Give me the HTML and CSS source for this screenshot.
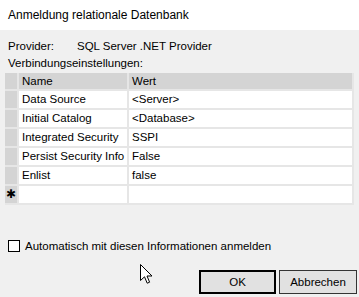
FILE: index.html
```html
<!DOCTYPE html>
<html lang="de">

<head>
    <meta charset="utf-8">
    <link rel="stylesheet" href="styles.css">
</head>

<body>
    <div class="titlebar">Anmeldung relationale Datenbank</div>
    <main class="dialog">
        <div class="provider-row">
            <span class="provider-label">Provider:</span>
            <span>SQL Server .NET Provider</span>
        </div>
        <div class="section-label">Verbindungseinstellungen:</div>

        <!-- property grid -->
        <div class="grid">
            <div class="rowhead"></div>
            <div class="colhead">Name</div>
            <div class="colhead">Wert</div>

            <div class="rowhead"></div>
            <div class="cell">Data Source</div>
            <div class="cell">&lt;Server&gt;</div>

            <div class="rowhead"></div>
            <div class="cell">Initial Catalog</div>
            <div class="cell">&lt;Database&gt;</div>

            <div class="rowhead"></div>
            <div class="cell">Integrated Security</div>
            <div class="cell">SSPI</div>

            <div class="rowhead"></div>
            <div class="cell">Persist Security Info</div>
            <div class="cell">False</div>

            <div class="rowhead"></div>
            <div class="cell">Enlist</div>
            <div class="cell">false</div>

            <div class="rowhead newrow">✱</div>
            <div class="cell"></div>
            <div class="cell"></div>
        </div>

        <label class="auto-login">
            <span class="checkbox"></span>
            Automatisch mit diesen Informationen anmelden
        </label>

        <div class="buttons">
            <button class="btn btn-default">OK</button>
            <button class="btn">Abbrechen</button>
        </div>
    </main>

    <svg class="cursor" width="13" height="21" viewBox="0 0 13 21">
        <path d="M0.5 0.5 L0.5 16.5 L4.5 12.8 L7.2 19.2 L9.6 18.2 L7 12 L12 12 Z" fill="#fff" stroke="#000" stroke-width="1" stroke-linejoin="miter" />
    </svg>
</body>

</html>
```

FILE: styles.css
```css
body {
    margin: 0;
    width: 359px;
    height: 297px;
    overflow: hidden;
    background: #f0f0f0;
    font-family: "Liberation Sans", Arial, sans-serif;
    font-size: 11.5px;
    color: #000;
    position: relative;
}

.titlebar {
    height: 30px;
    line-height: 30px;
    padding-left: 8px;
    background: #fff;
    font-size: 12px;
}

.dialog {
    display: flex;
    flex-direction: column;
    padding: 8px 2px 0 5px;
}

.provider-row {
    display: flex;
    line-height: 16px;
    padding-left: 3px;
}

.provider-label {
    width: 69px;
}

.section-label {
    line-height: 16px;
    margin-top: 1px;
    padding-left: 3px;
}

/* grid looks like a WinForms DataGridView */
.grid {
    display: grid;
    grid-template-columns: 12px 108px 223px;
    grid-template-rows: 16px repeat(6, 17px);
    gap: 2px;
    margin-top: 2px;
    padding: 0 2px 2px 0;
    background: #e6e6e6;
    width: 349px;
    box-sizing: border-box;
}

.rowhead,
.colhead {
    background: #d4d4d4;
}

.colhead,
.cell {
    line-height: 17px;
    padding-left: 3px;
    white-space: nowrap;
    overflow: hidden;
}

.colhead {
    line-height: 16px;
}

.cell {
    background: #fff;
}

.newrow {
    font-size: 12px;
    line-height: 17px;
    text-align: center;
}

.auto-login {
    display: flex;
    align-items: center;
    gap: 5px;
    margin-top: 33px;
    padding-left: 3px;
    line-height: 16px;
}

.checkbox {
    width: 10px;
    height: 10px;
    border: 1px solid #000;
    background: #fff;
}

.buttons {
    display: flex;
    justify-content: flex-end;
    gap: 3px;
    margin-top: 16px;
}

.btn {
    width: 78px;
    height: 24px;
    border: 1px solid #333;
    background: #e1e1e1;
    font-family: inherit;
    font-size: 11.5px;
    color: #000;
    padding: 0;
}

.btn-default {
    width: 77px;
    border: 2px solid #000;
}

.cursor {
    position: absolute;
    left: 140px;
    top: 264px;
}
```
